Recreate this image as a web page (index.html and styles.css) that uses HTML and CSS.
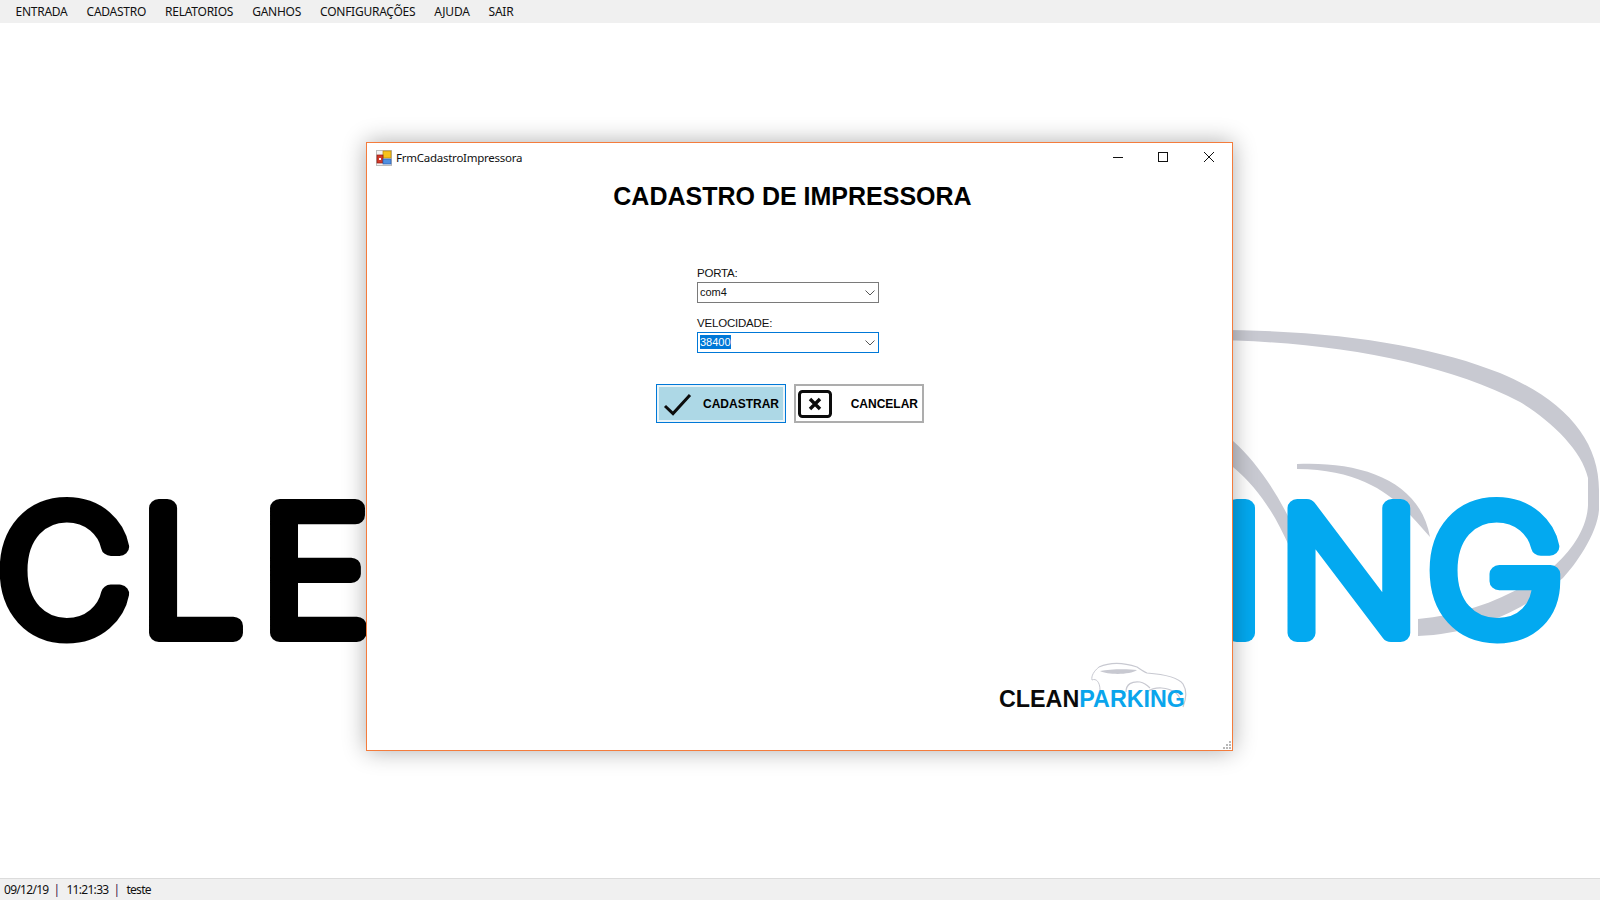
FILE: index.html
```html
<!DOCTYPE html>
<html lang="pt">
<head>
<meta charset="utf-8">
<title>Clean Parking</title>
<link rel="stylesheet" href="styles.css">
</head>
<body>
<nav class="menu">
  <span class="menu-item">ENTRADA</span>
  <span class="menu-item">CADASTRO</span>
  <span class="menu-item">RELATORIOS</span>
  <span class="menu-item">GANHOS</span>
  <span class="menu-item">CONFIGURAÇÕES</span>
  <span class="menu-item">AJUDA</span>
  <span class="menu-item">SAIR</span>
</nav>
<main class="desktop">
  <svg class="bg-logo" width="1600" height="856" viewBox="0 23 1600 856" aria-hidden="true">
    <g class="swoosh">
      <path d="M1200 330 C1330 329 1430 345 1500 373 C1565 400 1599 440 1599 490 L1599 510 C1597 535 1575 565 1563 578 C1530 605 1480 634 1418 636 L1418 619 C1470 614 1515 595 1553 567 C1570 552 1587 530 1588 505 L1588 478 C1582 450 1550 420 1520 402 C1440 360 1320 340 1200 340 Z"/>
      <path d="M1200 420 L1233 441 C1255 460 1275 490 1290 520 L1290 548 C1275 515 1260 490 1233 467 L1200 450 Z"/>
      <path d="M1297 464 C1360 461 1420 480 1430 537 C1405 510 1380 470 1297 469 Z"/>
    </g>
    <text class="bg-word" y="633" x="-3 129 241 345 480 600 720 850 980 1127 1183 1321"><tspan class="ink">CLEAN</tspan><tspan class="sky">PARKING</tspan></text>
  </svg>

  <section class="window">
    <header class="titlebar">
      <svg class="app-icon" width="16" height="16" viewBox="0 0 16 16">
        <rect x="0.5" y="0.5" width="15" height="15" fill="#f4f4f4" stroke="#bdbdbd"/>
        <rect x="7" y="1" width="8" height="7" fill="#f6c21c" stroke="#b8860b" stroke-width=".7"/>
        <rect x="1" y="5" width="6" height="8" fill="#d23a2a" stroke="#8c1c12" stroke-width=".7"/>
        <rect x="3" y="8" width="2" height="2" fill="#fff"/>
        <rect x="7" y="9" width="8" height="5" fill="#4f8fe0" stroke="#2a5db0" stroke-width=".7"/>
      </svg>
      <span class="title-text">FrmCadastroImpressora</span>
      <div class="win-controls">
        <svg class="win-btn" width="46" height="30" viewBox="0 0 46 30"><path d="M19 14.500H29" stroke="#111" fill="none"/></svg>
        <svg class="win-btn" width="46" height="30" viewBox="0 0 46 30"><rect x="18.5" y="9.500" width="9" height="9" stroke="#111" fill="none"/></svg>
        <svg class="win-btn" width="46" height="30" viewBox="0 0 46 30"><path d="M18 9L28 19M28 9L18 19" stroke="#111" fill="none"/></svg>
      </div>
    </header>
    <h1 class="heading">CADASTRO DE IMPRESSORA</h1>
    <div class="form">
      <div class="field">
        <label class="field-label">PORTA:</label>
        <div class="combo"><span class="combo-value">com4</span><svg class="chev" width="10" height="6" viewBox="0 0 10 6"><path d="M.5 .5L5 5L9.500 .5" fill="none" stroke="#555"/></svg></div>
      </div>
      <div class="field">
        <label class="field-label">VELOCIDADE:</label>
        <div class="combo combo-focus"><span class="combo-value selected">38400</span><svg class="chev" width="10" height="6" viewBox="0 0 10 6"><path d="M.5 .5L5 5L9.500 .5" fill="none" stroke="#555"/></svg></div>
      </div>
    </div>
    <div class="actions">
      <button class="btn btn-primary">
        <svg width="30" height="24" viewBox="0 0 30 24"><path d="M2 14L10 21.500L27 3" fill="none" stroke="#0c0c0c" stroke-width="3"/></svg>
        <span class="btn-text">CADASTRAR</span>
      </button>
      <button class="btn btn-cancel">
        <svg width="34" height="28" viewBox="0 0 34 28"><rect x="1.500" y="1.500" width="31" height="25" rx="3" fill="#fff" stroke="#0c0c0c" stroke-width="3"/><path d="M12 9L22 19M22 9L12 19" stroke="#0c0c0c" stroke-width="3.400" fill="none"/></svg>
        <span class="btn-text">CANCELAR</span>
      </button>
    </div>
    <div class="small-logo">
      <svg class="car" width="100" height="50" viewBox="0 0 100 50" fill="none" stroke="#c8c9d1">
        <path d="M9 7C18 3 32 2 47 7C50 9 54 12 57 13C70 14 88 17 93 24C98 32 95 42 93 47" stroke-width="1.200"/>
        <path d="M10 11C20 9 38 9 47 10C40 15 18 15 10 11Z" fill="#c8c9d1" stroke="none"/>
        <path d="M9 7C4 11 1 16 2 20C6 18 10 22 10 30" stroke-width="1"/>
        <path d="M36 32C36 24 42 21 50 22C55 23 58 26 60 28M57 32C65 26 78 27 86 33C88 35 90 38 90 40" stroke-width="1.200"/>
      </svg>
      <span class="small-word"><span class="ink-text">CLEAN</span><span class="sky-text">PARKING</span></span>
    </div>
    <svg class="grip" width="10" height="10" viewBox="0 0 10 10" fill="#b8b8b8">
      <rect x="7" y="1" width="2" height="2"/><rect x="4" y="4" width="2" height="2"/><rect x="7" y="4" width="2" height="2"/>
      <rect x="1" y="7" width="2" height="2"/><rect x="4" y="7" width="2" height="2"/><rect x="7" y="7" width="2" height="2"/>
    </svg>
  </section>
</main>
<footer class="status">
  <span>09/12/19</span><span class="sep">|</span><span>11:21:33</span><span class="sep">|</span><span>teste</span>
</footer>
</body>
</html>
```
FILE: styles.css
```css
* { box-sizing: border-box; }
html, body { height: 100%; }
body {
  margin: 0;
  height: 900px;
  width: 1600px;
  overflow: hidden;
  background: #fff;
  display: flex;
  flex-direction: column;
  font-family: "Noto Sans", "Open Sans", sans-serif;
  color: #111;
}
.menu {
  height: 23px;
  flex: none;
  background: #f0f0f0;
  display: flex;
  align-items: center;
  padding-left: 6px;
  font-size: 12px;
  letter-spacing: -0.25px;
}
.menu-item { padding: 0 9.500px; }
.desktop { flex: 1; position: relative; overflow: hidden; }
.bg-logo { position: absolute; left: 0; top: 0; }
.swoosh { fill: #c8c9d1; }
.bg-word {
  font-family: "Inter", "Liberation Sans", sans-serif;
  font-size: 172px;
  font-weight: 200;
  stroke-width: 18px;
  stroke-linejoin: round;
  transform: scaleX(1.08);
}
.ink { fill: #000; stroke: #000; }
.sky { fill: #03a9f0; stroke: #03a9f0; }

.window {
  position: absolute;
  left: 366px;
  top: 119px;
  width: 867px;
  height: 609px;
  background: #fff;
  border: 1px solid #f47c3c;
  box-shadow: 0 0 22px rgba(0, 0, 0, .32);
  display: flex;
  flex-direction: column;
  align-items: stretch;
}
.titlebar {
  height: 29px;
  flex: none;
  display: flex;
  align-items: center;
  padding-left: 9px;
}
.app-icon { flex: none; }
.title-text { margin-left: 4px; font-size: 11.500px; letter-spacing: -0.25px; }
.win-controls { margin-left: auto; display: flex; margin-right: 0; }
.win-btn { display: block; }
.heading {
  margin: 9px 0 0;
  padding-right: 14px;
  text-align: center;
  font: 700 25px/30px "Liberation Sans", Arial, sans-serif;
  color: #000;
}
.form {
  margin: 55px 0 0 330px;
  width: 182px;
  display: flex;
  flex-direction: column;
  gap: 13px;
}
.field { display: flex; flex-direction: column; }
.field-label {
  font: 11.500px/14px "Liberation Sans", Arial, sans-serif;
  letter-spacing: -0.2px;
  height: 16px;
  color: #111;
}
.combo {
  height: 21px;
  border: 1px solid #7a7a7a;
  background: #fff;
  display: flex;
  align-items: center;
  justify-content: space-between;
  padding: 0 3px 2px 2px;
  font: 11px/14px "Liberation Sans", Arial, sans-serif;
}
.combo-focus { border-color: #0078d7; }
.selected { background: #0078d7; color: #fff; }
.chev { margin-top: 2px; }
.actions {
  margin: 31px 0 0 289px;
  display: flex;
  gap: 8px;
}
.btn {
  width: 130px;
  height: 39px;
  display: flex;
  align-items: center;
  justify-content: space-between;
  padding: 0 4px;
  font: 700 12px "Liberation Sans", Arial, sans-serif;
  color: #000;
}
.btn-primary {
  background: #add8e6;
  border: 1px solid #0078d7;
  box-shadow: inset 0 0 0 2px #eaf4f8;
  padding: 0 6px 0 6px;
}
.btn-cancel {
  background: #fff;
  border: 2px solid #adadad;
  padding-left: 2px;
}
.small-logo {
  position: absolute;
  left: 633px;
  top: 518px;
  width: 190px;
  height: 50px;
  display: flex;
  align-items: flex-end;
}
.car { position: absolute; left: 90px; top: -1px; }
.small-word {
  position: relative;
  left: -1px;
  font: 700 23.300px/24px "Liberation Sans", Arial, sans-serif;
  white-space: nowrap;
}
.ink-text { color: #0a0a0a; }
.sky-text { color: #0aa5ec; }
.grip { position: absolute; right: 0; bottom: 0; }
.status {
  height: 22px;
  padding-bottom: 1px;
  flex: none;
  background: #f0f0f0;
  border-top: 1px solid #dcdcdc;
  display: flex;
  align-items: center;
  padding-left: 4px;
  font-size: 12px;
  letter-spacing: -0.7px;
}
.sep { margin: 0 7px 0 5px; color: #401040; }
```
